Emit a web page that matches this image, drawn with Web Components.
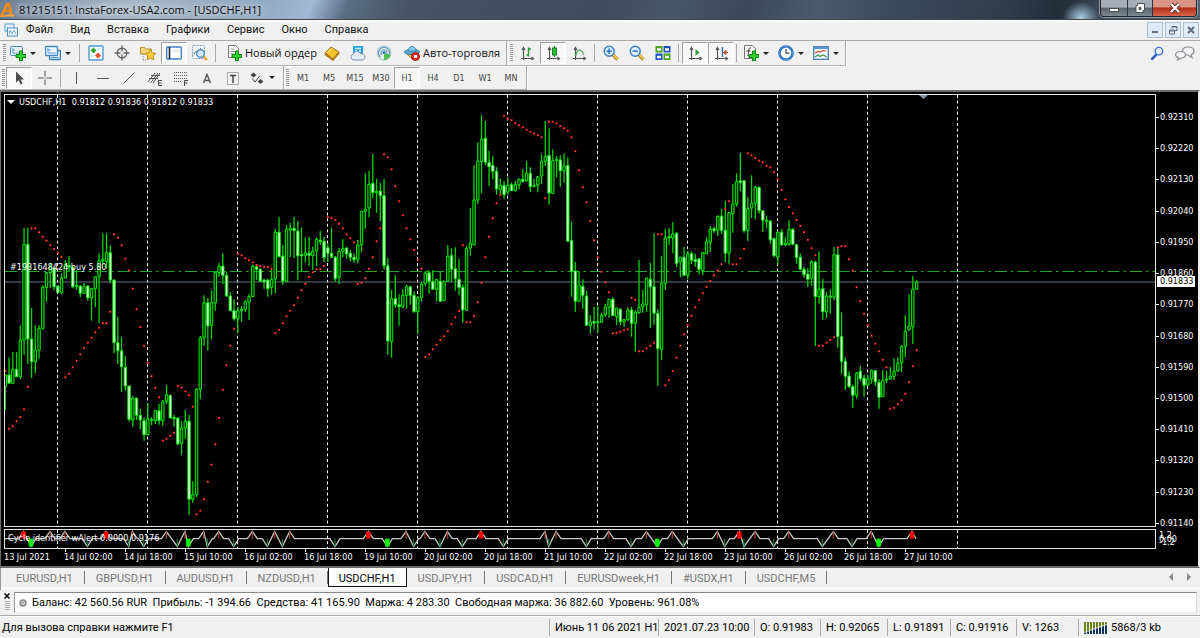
<!DOCTYPE html>
<html lang="ru">
<head>
<meta charset="utf-8">
<title>81215151: InstaForex-USA2.com - [USDCHF,H1]</title>
<style>
html,body{height:100%}
body{margin:0;background:#f0f0f0;color:#111;font:11px/14px Roboto,"Noto Sans",sans-serif;overflow:hidden}
</style>
</head>
<body>
<trade-terminal></trade-terminal>
<script>
const define = (name, html, init) => {
  const tpl = document.createElement('template');
  tpl.innerHTML = html;
  customElements.define(name, class extends HTMLElement {
    connectedCallback() {
      if (this.shadowRoot) return;
      this.attachShadow({mode: 'open'}).append(tpl.content.cloneNode(true));
      if (init) init.call(this, this.shadowRoot);
    }
  });
};

/* ---------- icon set, 16 x 16 ---------- */
const plus = '<path d="M8.500 5.500h3v3.500h3.500v3h-3.500v3.500h-3v-3.500h-3.500v-3h3.500z" transform="translate(1 .5)" fill="#2fd32f" stroke="#0a7d0a"/>';
const lens = '<path d="M9.500 9.500l5 5" stroke="#b98a1a" stroke-width="3.200"/><path d="M10 9.500l4.500 4.500" stroke="#f6d45c" stroke-width="1.400"/><circle cx="6.200" cy="6.200" r="5" fill="#d8efff" stroke="#3d82c8" stroke-width="1.500"/>';
const axes = '<path d="M4.500 3v12M2 13.500h12M3 5l1.500-2.500L6 5M12.500 12l2 1.500-2 1.500" stroke="#555" fill="none" stroke-width="1.200"/>';
const ICONS = {
  newchart: '<rect x=".5" y="1.500" width="12" height="9" rx="1" fill="#eaf4fd" stroke="#4087bf"/><path d="M2 5h3M3 3v5h7" stroke="#5b9bd0" fill="none"/>' + plus,
  profiles: '<rect x="4.500" y="5.500" width="11" height="9" rx="1" fill="#eaf4fd" stroke="#3e7fba" stroke-width="1.400"/><rect x=".5" y="1.500" width="12" height="9" rx="1" fill="#f3f9ff" stroke="#4087bf" stroke-width="1.400"/><path d="M3 3v5h8M2 5h4M6 12.500h8" stroke="#5b9bd0" fill="none"/>',
  market: '<rect x="1" y="1" width="14" height="14" rx="1" fill="#fff" stroke="#4c9bd6" stroke-width="1.400"/><path d="M5.500 2.500l3 3-3 3-3-3z" fill="#2fa52f"/><path d="M10 7.500l3 3-3 3-3-3z" fill="#e2502c"/><path d="M9 4h4M3 11h3" stroke="#b9cfe0"/>',
  target: '<circle cx="8" cy="8" r="4.800" fill="none" stroke="#666" stroke-width="1.400"/><path d="M8 .500v6M8 9.500v6M.500 8h6M9.500 8h6" stroke="#666" stroke-width="1.400"/>',
  nav: '<path d="M.500 2.500h4l1 1.500h6v5h-11z" fill="#f6d978" stroke="#b99032"/><path d="M3 9v6h3" stroke="#888" fill="none" stroke-dasharray="1 1"/><path d="M10.500 4.500l1.700 3.400 3.700.5-2.700 2.600.7 3.700-3.400-1.700-3.300 1.700.6-3.700-2.600-2.600 3.600-.5z" fill="#f9cf3e" stroke="#bd8b18"/>',
  terminal: '<rect x=".7" y="2" width="14.600" height="12" rx="1" fill="#fff" stroke="#3f82c2" stroke-width="1.400"/><path d="M3.500 2v12" stroke="#22262c" stroke-width="1.600"/><path d="M6 5h8M6 7h8" stroke="#d3e2ef"/>',
  tester: '<rect x=".5" y=".5" width="12" height="13" rx="1" fill="#eef3f7" stroke="#8c9ba9" stroke-dasharray="2 1"/><path d="M2 9l2-3 2 2 3-5" stroke="#777" fill="none"/><path d="M11 11l4 4" stroke="#e0a92a" stroke-width="2.400"/><circle cx="8.500" cy="8.500" r="3.800" fill="#cfe6fa" fill-opacity=".8" stroke="#4d90cc" stroke-width="1.400"/>',
  order: '<path d="M2.500.500h7l3 3v9h-10z" fill="#fff" stroke="#777"/><path d="M4.500 4h4M4.500 6.500h6M4.500 9h4" stroke="#999"/>' + plus,
  editor: '<path d="M1 8l6-6 8 5-6 7z" fill="#f5c22d" stroke="#a8741a"/><path d="M1 8v2l8 5.500V14zM9 14v1.500l6-6.500V7z" fill="#c3881c" stroke="#94610c" stroke-width=".6"/><path d="M4 7.500l4-4" stroke="#fff3b0"/>',
  vps: '<path d="M3 1h10v8H3z" fill="#26a0e8"/><path d="M5 3.500h6M5 6h2M9 6h2" stroke="#d4f0ff" stroke-width="1.400"/><path d="M3.500 15a3 3 0 01-.5-5.800 4 4 0 017.500-.4A3.200 3.200 0 0113 15z" fill="#e7edf6" stroke="#8795b0"/>',
  signal: '<circle cx="8" cy="8" r="7" fill="#e4efe9" stroke="#9fc0b8"/><path d="M4.500 12a5.500 5.500 0 117 0M6 10a3 3 0 114 0" fill="none" stroke="#6a9fc0" stroke-width="1.200"/><circle cx="8" cy="7.500" r="1.500" fill="#2d6dc4"/><path d="M8 8v7a7 7 0 006.500-5z" fill="#4fbd4f"/>',
  auto: '<path d="M2 8l6 6 6-6z" fill="#f3c445" stroke="#b58618"/><ellipse cx="8" cy="7" rx="7.500" ry="2.600" fill="#5eabd4" stroke="#2e789f"/><path d="M4 6a4 4.500 0 018 0z" fill="#87cbea" stroke="#3b86ac"/><circle cx="11.500" cy="11.500" r="4" fill="#e02b20" stroke="#a3130c"/><rect x="10" y="10" width="3" height="3" fill="#fff"/>',
  bars: axes + '<path d="M9.500 2.500v9M9.500 4h2.500M7.500 10h2" stroke="#1f9b2e" stroke-width="1.400"/>',
  candle: axes + '<path d="M9.500 1v11" stroke="#148224" stroke-width="1.200"/><rect x="7.500" y="3" width="4" height="7" fill="#29c43b" stroke="#148224"/>',
  line: axes + '<path d="M4.500 11c2-7 5-8 8.500-1.500" fill="none" stroke="#4fab57" stroke-width="1.300"/>',
  zoomin: lens + '<path d="M6.200 3.500v5.400M3.500 6.200h5.400" stroke="#2d70b8" stroke-width="1.500"/>',
  zoomout: lens + '<path d="M3.500 6.200h5.400" stroke="#2d70b8" stroke-width="1.500"/>',
  tile: '<rect x=".5" y="1" width="7" height="6.500" fill="#4aa51e"/><rect x="8.500" y="1" width="7" height="6.500" fill="#1e4fc4"/><rect x=".5" y="8.500" width="7" height="6.500" fill="#1e4fc4"/><rect x="8.500" y="8.500" width="7" height="6.500" fill="#4aa51e"/><path d="M2 4.500h4M10 4.500h4M2 12h4M10 12h4" stroke="#fff" stroke-width="2.400"/>',
  scroll: axes + '<path d="M8.500 4v7l4-3.500z" fill="#22a334"/>',
  shift: axes + '<path d="M9.500 2v10" stroke="#376ea8" stroke-width="1.400"/><path d="M15 7.500h-4M13 5.500l-2.500 2 2.500 2z" stroke="#c6462a" fill="#c6462a"/>',
  indic: '<path d="M1.500.500h8l3 3v10h-11z" fill="#fff" stroke="#777"/><path d="M8 3c-3-1-2 3-3 8M3.500 6h4" stroke="#333" fill="none"/>' + plus,
  clock: '<circle cx="8" cy="8" r="6.600" fill="#f7fbff" stroke="#1c62b4" stroke-width="2.400"/><circle cx="8" cy="8" r="6.800" fill="none" stroke="#5ba4e6" stroke-width=".8"/><path d="M8 4v4.200h3.500" fill="none" stroke="#444" stroke-width="1.200"/>',
  templ: '<rect x=".7" y="1.700" width="14.600" height="12.600" fill="#f5f9fc" stroke="#4f86b8" stroke-width="1.400"/><path d="M1 3h14" stroke="#5e95c8" stroke-width="2"/><path d="M2 8l3-1.500 2 .500 3-1.500 3 .500" stroke="#c84b32" fill="none" stroke-width="1.200"/><path d="M2 12l3-2 2 1.500 3-1.500 4 2" stroke="#3a9444" fill="none" stroke-width="1.200"/>',
  cursor: '<path d="M5 1.500v11l2.600-2.300 2 4.300 1.900-.9-2-4.100h3.500z" fill="#4a4a4a"/>',
  cross: '<path d="M8 1v5.500M8 9.500V15M1 8h5.500M9.500 8H15M8 7.500v1" stroke="#555"/>',
  vline: '<path d="M7.500 2v12" stroke="#555"/>',
  hline: '<path d="M2 8.500h12" stroke="#555"/>',
  trend: '<path d="M2.500 13.500l11-11" stroke="#555"/>',
  chan: '<path d="M1 12L8 3M3.500 13L11 3M6 13l7-10M2 8.500h9M4 5.500h9" stroke="#555" fill="none"/><path d="M15 10.500h-3.500v5H15M11.500 13h3" stroke="#444" fill="none"/>',
  fib: '<path d="M1 2.500h13M1 5.500h13M1 8.500h13M1 11.500h8" stroke="#555" stroke-dasharray="1 1"/><path d="M15 10.500h-3.500V16M11.500 13h3" stroke="#444" fill="none"/>',
  text: '<path d="M4.500 13L8 4.500 11.500 13M5.500 10.500h5" fill="none" stroke="#555" stroke-width="1.400"/>',
  label: '<rect x="2.500" y="2.500" width="11" height="12" fill="none" stroke="#666" stroke-dasharray="1 1"/><path d="M5 5.500h6M8 5.500V13" stroke="#444" stroke-width="1.500" fill="none"/>',
  shapes: '<path d="M4.500 2.500l3 2.500-3 2.500-3-2.500z" fill="#444"/><path d="M11.500 9l3 2.500-3 2.500-3-2.500z" fill="#444"/><path d="M3 8.500l3 3.500 5-6.500" stroke="#444" fill="none"/>',
  search: '<path d="M7 9l-5.500 5.500" stroke="#2a57c0" stroke-width="2.600"/><circle cx="9.500" cy="5.500" r="4" fill="#eef4ff" stroke="#3f6fd6" stroke-width="1.500"/>',
};
const svg = (name, w = 16) => `<svg width="${w}" height="${w}" viewBox="0 0 16 16" fill="none" aria-hidden="true">${ICONS[name]}</svg>`;

define('tool-button', `
<style>
:host{display:block;flex:none}
button{box-sizing:border-box;width:26px;height:22px;margin:0;border:1px solid transparent;padding:0;background:none;font:inherit;color:#444;display:flex;align-items:center;justify-content:center;gap:3px;white-space:nowrap}
svg{flex:none}
:host([drop]) button{width:35px;justify-content:flex-start;padding-left:2px;gap:4px}
:host([drop]) button::after{content:"";border:3px solid transparent;border-top-color:#222;border-bottom:0}
:host([pressed]) button{border-color:#a0a0a0 #fff #fff #a0a0a0;background:#f8f8f8}
:host([wide]) button{width:100px;padding:0 0 0 6px;justify-content:flex-start;color:#111;font:11px/14px "Open Sans",sans-serif}
:host([wide=l]) button{width:109px}
:host([tf]) button{font:9px/12px "DejaVu Sans Condensed","DejaVu Sans",sans-serif}
</style><button type="button"><slot></slot></button>`, function (r) {
  const n = this.getAttribute('icon'), b = r.querySelector('button');
  if (n) b.insertAdjacentHTML('afterbegin', svg(n));
  if (this.title) b.setAttribute('aria-label', this.title);
});

define('tool-band', `
<style>
:host{display:flex;align-items:center;box-sizing:border-box;padding-right:2px;border-right:1px solid #a5a5a5;border-bottom:1px solid #b4b4b4;box-shadow:1px 1px #fff}
:host([tight]){padding:0 0 0 1px}
i{flex:none;width:3px;height:18px;margin:0 1px 0 2px;background:repeating-linear-gradient(#999 0 1px,#f0f0f0 1px 2px)}
::slotted(hr){flex:none;width:1px;height:18px;margin:0 3px 0 2px;border:0;background:#a8a8a8}
</style><i></i><slot></slot>`);

define('title-bar', `
<style>
:host{display:flex;align-items:flex-start;height:19px;border-bottom:1px solid #3e454d;color:#0a0a0a;
background:radial-gradient(ellipse 18px 16px at 1081px 18px,#a9cbe2,transparent),radial-gradient(ellipse 150px 30px at 125px 9px,rgba(200,212,222,.75),transparent),
linear-gradient(115deg,#5f7288 0,#8ba3ba 20%,#9fb9d4 26%,#5a6e86 29%,#475365 34%,#3f4c5e 50%,#485669 56%,#3a4859 62%,#4b5a6f 68%,#3b4a5c 74%,#2e3b4a 84%,#222d39 88%,#3a4756 91%,#56636f 100%)}
.logo{flex:none;margin:2px 3px 0 0}
h1{flex:1;margin:3px 0 0;font:11px/14px "Open Sans",sans-serif;text-shadow:0 0 4px #c8d4de,0 0 6px #c8d4de,0 0 8px #c8d4de;white-space:nowrap}
.box{display:flex;margin-right:3px;border:1px solid #1f2730;border-top:0;border-radius:0 0 4px 4px;overflow:hidden;box-shadow:0 0 0 1px #8f9ba6}
button{height:16px;padding:0;border:0;border-right:1px solid #2c3540;display:grid;place-items:center;background:linear-gradient(#a7adb4 0 45%,#59616b 50%,#7e8790)}
.min{width:27px}.max{width:25px}
.close{width:43px;border:0;background:linear-gradient(#d99486 0 42%,#b1301b 50%,#d8624a)}
</style>
<svg class="logo" width="16" height="16" viewBox="0 0 16 16" aria-hidden="true"><path d="M0 14L6 1h4l3 12h-3L9 10H5l-2 4zM6 8h3L8 4z" fill="#ee8a1c" fill-rule="evenodd"/><path d="M0 14c5-1 9-2 15-1l-2 2c-4-1-8 0-13 0z" fill="#f7a43a"/></svg>
<h1>81215151: InstaForex-USA2.com - [USDCHF,H1]</h1>
<div class="box">
<button class="min" aria-label="Свернуть"><svg width="12" height="12"><rect x="1.500" y="6.500" width="9" height="3" fill="#fff" stroke="#4a4f57"/></svg></button>
<button class="max" aria-label="Развернуть"><svg width="12" height="12" fill="none"><path d="M3.500 1.500h7v7h-1.500v2h-7v-7h1.500z" fill="#fff" stroke="#4a4f57"/><path d="M5 5.500h2v2H5z" fill="#59616b" stroke="#4a4f57"/></svg></button>
<button class="close" aria-label="Закрыть"><svg width="12" height="12" fill="none"><path d="M2 2l8 8M10 2l-8 8" stroke="#54201a" stroke-width="4"/><path d="M2 2l8 8M10 2l-8 8" stroke="#fff" stroke-width="2.400"/></svg></button>
</div>`);

define('menu-bar', `
<style>
:host{display:flex;align-items:center;box-sizing:border-box;height:21px;background:linear-gradient(#fff,#f0f0f0 3px);border-bottom:1px solid #aaa}
.doc{margin:0 0 0 4px}
nav{flex:1;display:flex}
nav button{border:0;background:none;margin:0;padding:0 9px 0 8px;font:11px/16px Roboto,sans-serif;color:#111}
.mdi{display:flex;gap:2px;padding-right:1px}
.mdi button{width:16px;height:16px;padding:0;border:1px solid #a9bfd4;background:#dfebf7;display:grid;place-items:center}
</style>
<svg class="doc" width="14" height="14" viewBox="0 0 14 14" aria-hidden="true"><rect x="1" y="1" width="9" height="7" fill="#dff0fc" stroke="#5a9bd0"/><rect x="3.500" y="5" width="10" height="8" fill="#f4faff" stroke="#4a8cc6"/><path d="M5 11l1-4 2 4 2-4 2 4" stroke="#69a6d8" fill="none"/></svg>
<nav></nav>
<div class="mdi"><button aria-label="Свернуть окно"><svg width="8" height="8"><path d="M1 6h6" stroke="#5c6f82" stroke-width="2"/></svg></button><button aria-label="Восстановить окно"><svg width="9" height="9" fill="none" stroke="#5c6f82"><path d="M3 2.500v-2h5v4H6M3 1h5M.500 4h5v4h-5zM.500 5h5"/></svg></button><button aria-label="Закрыть окно"><svg width="8" height="8"><path d="M1 1l6 6M7 1L1 7" stroke="#5c6f82" stroke-width="2"/></svg></button></div>`, function (r) {
  r.querySelector('nav').innerHTML = ['Файл', 'Вид', 'Вставка', 'Графики', 'Сервис', 'Окно', 'Справка'].map(t => `<button type="button">${t}</button>`).join('');
});

/* ---------- chart data: high, low, body top, body bottom, in thirds of a pixel; a trailing 1 marks a falling bar ---------- */
const BARS = `855 960 855 890|802 880 855 880 1|786 880 838 880|786 862 838 860 1|706 868 750 860|414 795 463 750|414 822 463 747 1|654 864 747 815 1|706 850 780 815|706 806 716 780|586 716 592 716|545 635 548 592|518 593 530 548|530 601 533 590 1|586 608 588 608 1|550 613 564 608|510 565 524 564|498 545 526 532 1|530 595 532 590 1|540 600 586 590|586 622 588 610 1|578 610 590 610|585 632 588 624 1|594 692 596 624|558 652 560 596|490 700 512 560|430 524 508 512|430 536 488 515|465 580 488 570 1|568 790 570 758 1|680 822 758 782 1|740 906 782 830 1|798 902 832 888 1|888 995 888 988 1|918 1010 924 990|924 990 924 976 1|956 1018 976 990 1|982 1052 992 1034 1|940 1034 986 1034|982 1006 988 992|960 1002 962 992|942 1004 962 992 1|930 1008 936 992|886 942 914 934|915 984 916 984 1|974 1010 982 986 1|982 1066 984 1062 1|994 1094 1014 1060|960 1046 994 1014|975 1275 994 1228 1|1174 1238 1214 1228|895 1222 898 1214|738 928 744 898|616 768 638 744|624 782 638 708 1|602 748 638 706|545 662 548 638|518 560 528 548|490 582 528 556 1|545 620 556 618 1|606 664 618 662 1|628 692 662 686 1|650 730 662 686|648 696 658 662|630 666 636 658|612 690 620 636|524 620 528 620|525 570 530 538 1|535 576 538 574 1|566 596 570 576 1|566 620 570 596 1|540 614 568 592|417 610 427 567|380 502 427 500 1|465 584 498 574 1|405 576 418 574|398 502 416 420|380 505 415 422 1|393 571 423 497 1|412 545 494 498 1|442 518 488 496|442 528 490 496 1|470 540 484 497|442 528 448 483|422 465 451 455 1|440 516 454 503 1|460 516 473 490 1|413 504 490 502 1|498 575 502 566 1|474 582 484 562|448 502 476 484|471 506 474 492 1|480 514 490 502 1|490 518 502 509 1|450 520 465 508|363 487 364 464|250 416 357 364|242 382 283 354|191 324 280 308 1|267 368 304 308|278 394 303 317 1|267 539 317 527 1|504 794 527 753 1|600 803 626 755|555 654 626 644 1|613 707 644 650 1|597 655 616 650|585 656 589 616|588 644 590 616 1|603 668 616 665 1|618 731 623 665|575 635 582 623|544 587 549 580|540 611 548 574 1|540 600 575 598 1|566 634 569 598|544 635 574 634 1|572 633 574 632|465 576 499 574|475 576 497 538 1|472 602 536 566 1|507 616 568 593 1|582 698 592 660 1|468 663 476 661|354 497 460 474|225 466 330 464|157 343 213 330|76 310 148 215|93 225 145 217 1|182 288 217 230 1|197 268 226 244 1|232 314 244 297 1|265 314 286 299|273 326 286 314 1|262 314 286 306|277 304 284 302 1|273 304 284 302|265 298 268 284|237 278 268 274 1|213 275 250 272|232 306 250 290 1|266 291 286 290|258 307 261 286|192 282 214 258|93 228 200 214|115 344 196 310 1|178 312 212 310|198 262 208 212|196 291 210 242 1|190 278 228 242|202 456 226 454 1|394 620 452 544 1|516 665 542 634 1|543 635 586 634|568 656 589 616 1|603 707 618 706 1|676 731 696 706|650 718 694 700 1|647 729 695 698|668 698 676 697|642 682 652 674|628 684 628 652|622 677 628 677 1|653 706 654 680|655 706 658 695 1|686 711 689 695|652 692 660 689|650 740 660 700 1|661 785 667 700|510 672 652 668|600 668 642 650|562 665 564 644|518 714 568 590 1|430 704 590 670 1|656 887 670 776 1|498 810 581 778|416 600 444 580|414 465 440 444 1|396 490 432 444|427 532 430 520 1|500 561 502 516|471 558 502 556 1|483 568 491 556|485 523 491 511 1|491 530 508 515 1|504 552 506 538 1|487 556 488 542|442 492 455 491|408 486 418 457|410 428 416 422 1|376 438 379 421|357 432 379 421 1|333 517 421 490 1|366 523 368 490|282 428 342 371|250 350 275 342|189 304 272 278 1|270 428 272 422 1|322 453 356 422|256 384 340 354|288 388 292 340|290 371 292 362 1|360 426 362 391 1|378 415 390 394|390 461 393 449 1|442 503 446 497 1|424 524 427 502|418 466 427 465 1|442 467 460 465|391 467 418 463|415 465 418 463 1|462 521 464 503 1|490 540 502 538 1|530 563 538 554 1|534 591 552 568 1|510 587 516 565|512 768 516 620 1|484 641 598 620|566 689 596 665 1|606 684 618 665|598 671 618 622|471 630 494 622|470 773 494 740 1|667 852 740 814 1|802 900 814 859 1|844 893 858 890 1|884 953 890 916 1|846 926 850 916|828 872 844 866 1|854 920 864 886 1|855 888 867 886|839 881 841 867|841 887 842 876 1|867 956 877 922 1|840 920 871 920|842 880 867 870|831 869 859 867|804 870 844 859|801 846 820 842|765 847 769 818|676 802 724 769|613 722 708 720|558 762 598 709|571 600 576 598`.split('|').map(s => s.split(' ').map(Number));
const SAR = [842,1016,1009,994,981,958,890,415,415,427,440,452,466,477,488,500,862,851,832,812,793,775,758,743,727,713,700,700,665,433,443,466,506,541,596,658,711,767,818,859,893,922,1052,1046,1037,1028,888,893,904,916,950,1273,1262,1228,1175,1124,1063,984,899,826,767,716,491,496,505,511,517,525,528,530,531,536,730,719,700,679,662,646,623,601,581,561,547,538,538,528,382,384,390,401,415,433,445,457,581,578,565,536,502,454,415,193,202,238,289,334,376,415,448,480,511,536,801,793,778,764,750,739,724,703,682,663,466,697,697,677,637,578,502,440,385,340,314,77,86,91,100,106,112,119,125,130,136,142,325,95,95,100,109,115,122,142,184,241,292,337,393,451,502,545,577,607,730,728,725,721,718,623,629,784,784,775,767,758,433,433,886,871,843,803,767,733,706,677,652,629,610,590,573,556,542,523,358,334,523,523,505,477,190,196,204,212,217,227,232,247,268,300,328,351,370,390,407,427,449,475,496,767,767,758,750,742,472,469,469,508,542,592,634,671,706,737,761,784,809,832,956,953,943,931,911,877,829,781];
/* cycle turns: x in thirds of a pixel; u/d = minor high/low, U/D = major */
const CYCLE = '71U 93D 150u 195u 262d 318U 386d 397u 431d 499u 532d 555u 565D 611u 622d 656u 701d 757u 802d 824u 847d 869u 1005d 1105U 1162D 1218u 1241d 1275u 1320d 1342u 1387d 1443U 1510d 1635u 1646d 1668u 1759d 1826u 1893d 1939u 1972D 2017u 2050d 2152u 2174d 2218U 2232d 2265u 2321d 2366u 2467d 2500u 2556d 2614u 2636D 2736U';
const STEP = 3.75;

define('price-chart', `
<style>
:host{display:grid;grid-template:minmax(0,1fr) 20px 15px / minmax(0,1fr) 40px;row-gap:2px;box-sizing:border-box;padding:2px 2px 0 3px;background:#000;color:#fff;
border:solid #6b6b6b;border-width:2px 2px 2px 1px;border-right-color:#f0f0f0;font:9px/12px "DejaVu Sans Condensed","DejaVu Sans",sans-serif}
.plot{position:relative;border:1px solid #e4e4e4;min-height:0;min-width:0}
.plot svg{display:block;width:100%;height:100%}
.cap{position:absolute;left:2px;top:1px;display:flex;align-items:center;gap:4px;white-space:pre}
.cap::before{content:"";border:4px solid transparent;border-top-color:#fff;border-bottom:0}
.pos{position:absolute;left:5px;top:166px}
.sub .name{position:absolute;left:3px;top:2px}
.axis{display:flex;flex-direction:column;justify-content:space-between;padding:17px 0 0;margin-bottom:-2px;position:relative}
.axis span{padding-left:4px;background:linear-gradient(#fff,#fff) 0 6px/3px 1px no-repeat}
.now{position:absolute;left:1px;top:182px;width:38px;box-sizing:border-box;padding-left:3px;background:#fff;color:#000;line-height:11px}
.osc{position:relative}
.osc span{position:absolute;left:3px}
.osc span:nth-child(1){top:0}.osc span:nth-child(2){top:4px}.osc span:nth-child(3){top:7px}
.time{display:grid;grid-auto-flow:column;grid-auto-columns:60px;grid-column:1/3;margin-top:-2px}
.time span{height:12px;padding-top:2px;white-space:nowrap;background:linear-gradient(#fff,#fff) 1px 0/1px 3px no-repeat}
.time span:first-child{background:none}
</style>
<div class="plot"><svg role="img" aria-label="График USDCHF H1"></svg><div class="cap">USDCHF,H1  0.91812 0.91836 0.91812 0.91833</div><div class="pos">#1931648424 buy 5.80</div></div>
<div class="axis"><div class="now">0.91833</div></div>
<div class="plot sub"><svg aria-hidden="true"></svg><div class="name">Cycle identifier wAlert 0.0000 0.9176</div></div>
<div class="osc"><span>1.2</span><span>0.00</span><span>-1.2</span></div>
<div class="time"></div>`, function (r) {
  const [main, sub] = r.querySelectorAll('svg');
  let grid = '';
  for (let x = 57.5; x < 1000; x += 90) grid += `<line x1="${x}" x2="${x}" y1="0" y2="100%" stroke="#fff" stroke-dasharray="3 2.600"/>`;
  let wick = '', up = '', down = '', dots = '';
  BARS.forEach(([h, l, t, b, f], i) => {
    const x = 5.3 + i * STEP, y = v => (90 + v / 3).toFixed(1);
    wick += `M${x} ${y(h)}V${y(l)}`;
    const box = `M${x - 1.2} ${y(t)}h2.400V${y(b)}h-2.400z`;
    if (f) down += box; else up += box;
    dots += `M${x - 1} ${y(SAR[i])}h2`;
  });
  main.innerHTML = `<g transform="translate(-5 -95)"><g transform="translate(0 95)">${grid}</g>
<path d="M5 271.500H1160" stroke="#25a425" stroke-dasharray="12 4 2.500 4"/><path d="M5 282H1160" stroke="#667381" stroke-width="1.200"/>
<path d="${wick}" stroke="#00d400" stroke-width="1.300"/><path d="${up}" fill="#002c00" stroke="#00ee00"/><path d="${down}" fill="#f0fff0" stroke="#00e800"/>
<path d="${dots}" stroke="#ff1414" stroke-width="2"/><path d="${dots}" stroke="#ffb0a0" stroke-width=".7" stroke-dasharray="0 .6 .8 3"/>
<path d="M919 95h9l-4.500 4z" fill="#8496a8"/></g>`;
  const pts = CYCLE.split(' ').map(s => [parseInt(s) / 3, s.slice(-1)]);
  let line = 'M5 538.700', last = 5, marks = '';
  for (const [x, k] of pts) {
    const hi = k.toLowerCase() === 'u', y = hi ? 531.5 : 546.5;
    if (x - last > 11) { if (last > 5) line += `L${last + 5} 538.700`; line += `L${x - 5} 538.700`; }
    line += `L${x} ${y}`;
    last = x;
    marks += `<path d="M${x} 538.700V${y}" stroke="${hi ? (k === 'U' ? '#f00' : '#a33') : (k === 'D' ? '#0f0' : '#173')}" stroke-width="${k === k.toUpperCase() ? 4.5 : 1.2}"/>`;
  }
  line += `L${last + 4} 538.700`;
  sub.innerHTML = `<g transform="translate(-5 -530)"><g transform="translate(0 530)">${grid}</g><path d="${line}" fill="none" stroke="#c8c8c8" stroke-width="1.300"/>${marks}</g>`;
  r.querySelector('.axis').insertAdjacentHTML('beforeend', ['0.92310','0.92220','0.92130','0.92040','0.91950','0.91860','0.91770','0.91680','0.91590','0.91500','0.91410','0.91320','0.91230','0.91140'].map(p => `<span>${p}</span>`).join(''));
  r.querySelector('.time').innerHTML = ['13 Jul 2021','14 Jul 02:00','14 Jul 18:00','15 Jul 10:00','16 Jul 02:00','16 Jul 18:00','19 Jul 10:00','20 Jul 02:00','20 Jul 18:00','21 Jul 10:00','22 Jul 02:00','22 Jul 18:00','23 Jul 10:00','26 Jul 02:00','26 Jul 18:00','27 Jul 10:00'].map(p => `<span>${p}</span>`).join('');
});

define('chart-tabs', `
<style>
:host{display:flex;align-items:flex-start;height:22px;padding-left:4px;border-left:1px solid #999;box-sizing:border-box;background:linear-gradient(#f0f0f0 19px,#fafafa 19px)}
.list{display:flex;flex:1}
.list button{box-sizing:border-box;height:19px;margin:0;padding:0 12px 0 11px;border:0;background:linear-gradient(#777,#777) 100% 3px/1px 13px no-repeat;font:11px/22px Roboto,sans-serif;color:#777}
.list button[aria-selected=true]{background:#fff;color:#000;border:solid #111;border-width:0 1px 1px;padding:0 10px}
.arrow{border:0;background:none;padding:5px 5px 0;width:18px}
</style><div class="list" role="tablist"></div>
<button class="arrow" aria-label="Влево"><svg width="4" height="8" style="display:block"><path d="M4 0v8L0 4z" fill="#888"/></svg></button><button class="arrow" aria-label="Вправо"><svg width="4" height="8" style="display:block"><path d="M0 0v8l4-4z" fill="#888"/></svg></button>`, function (r) {
  r.querySelector('.list').innerHTML = ['EURUSD,H1','GBPUSD,H1','AUDUSD,H1','NZDUSD,H1','USDCHF,H1','USDJPY,H1','USDCAD,H1','EURUSDweek,H1','#USDX,H1','USDCHF,M5'].map((t, i) => `<button type="button" role="tab" aria-selected="${i === 4}">${t}</button>`).join('');
});

define('account-line', `
<style>
:host{display:flex;height:26px;box-sizing:border-box;padding:2px 3px 2px 0;border-bottom:1px solid #aaa}
.side{width:14px;display:flex;flex-direction:column;align-items:center}
.side button{border:0;background:none;padding:1px 0 2px;height:9px}
.side svg{display:block}
.side i{width:5px;height:9px;background:repeating-linear-gradient(#aaa 0 1px,#f0f0f0 1px 2px)}
.row{flex:1;display:flex;align-items:center;gap:5px;padding-left:4px;background:#fff;border:1px solid #888;border-color:#888 #ddd #eee #999;white-space:pre;color:#000}
</style>
<div class="side"><button type="button" aria-label="Закрыть"><svg width="6" height="6"><path d="M.500.500l5 5M5.500.500l-5 5" stroke="#000" stroke-width="1.500"/></svg></button><i></i></div>
<div class="row"><svg width="8" height="8"><circle cx="4" cy="4" r="3" fill="#ccc" stroke="#888" stroke-width="1.400"/><path d="M2.500 5.500l3-3" stroke="#888"/></svg><span>Баланс: 42 560.56 RUR  Прибыль: -1 394.66  Средства: 41 165.90  Маржа: 4 283.30  Свободная маржа: 36 882.60  Уровень: 961.08%</span></div>`);

define('status-bar', `
<style>
:host{display:grid;grid-template-columns:minmax(0,1fr) 109px 96px 66px 67px 63px 66px 62px 122px;height:22px;align-items:center;border-top:1px solid #fff;box-sizing:border-box;color:#000;white-space:nowrap}
span{box-sizing:border-box;height:17px;line-height:18px;padding-left:5px;border-left:1px solid #aaa;display:flex;align-items:center;gap:4px}
span:first-of-type{border:0;padding-left:2px}
</style>
<span>Для вызова справки нажмите F1</span><span>Июнь 11 06 2021 H1</span><span>2021.07.23 10:00</span><span>O: 0.91983</span><span>H: 0.92065</span><span>L: 0.91891</span><span>C: 0.91916</span><span>V: 1263</span><span class="net"></span>`, function (r) {
  let b = '';
  for (let i = 0; i < 8; i++) b += `<path d="M${i * 3 + 1} 0v${10 - i}" stroke="#6b8218" stroke-width="2"/><path d="M${i * 3 + 1} ${10 - i}V12" stroke="#16355e" stroke-width="2"/>`;
  r.querySelector('.net').innerHTML = `<svg width="23" height="12" aria-hidden="true">${b}<path d="M0 10.500L23 2.500" stroke="#f0f0f0" stroke-width=".8"/></svg>5868/3 kb`;
});

const tool = (icon, title, attrs = '', text = '') => `<tool-button icon="${icon}" title="${title}" ${attrs}>${text}</tool-button>`;
define('trade-terminal', `
<style>
:host{display:flex;flex-direction:column;height:100vh;min-height:400px}
price-chart{flex:1;min-height:0}
title-bar,menu-bar,chart-tabs,account-line,status-bar{flex:none}
.bars{display:flex;flex:none;height:25px}
.bars.draw{height:24px}
.tail{display:flex;flex:1;justify-content:flex-end;align-items:center;gap:10px;padding-right:5px}
.tail button{border:0;background:none;padding:0}
.tail svg{display:block}
</style>
<title-bar></title-bar><menu-bar></menu-bar>
<div class="bars">
<tool-band tight>${tool('newchart','Новый график','drop')}${tool('profiles','Профили','drop')}<hr>${tool('market','Обзор рынка')}${tool('target','Окно данных')}${tool('nav','Навигатор')}${tool('terminal','Терминал','pressed')}${tool('tester','Тестер стратегий')}<hr>${tool('order','Новый ордер','wide','Новый ордер')}${tool('editor','MetaEditor')}${tool('vps','VPS')}${tool('signal','Сигналы')}${tool('auto','Авто-торговля','wide="l"','Авто-торговля')}</tool-band>
<tool-band tight>${tool('bars','Бары')}${tool('candle','Свечи','pressed')}${tool('line','Линия')}<hr>${tool('zoomin','Увеличить')}${tool('zoomout','Уменьшить')}${tool('tile','Расположить окна')}<hr>${tool('scroll','Автопрокрутка','pressed')}${tool('shift','Сдвиг графика','pressed')}<hr>${tool('indic','Индикаторы','drop')}${tool('clock','Периоды','drop')}${tool('templ','Шаблоны','drop')}</tool-band>
<div class="tail"><button type="button" aria-label="Поиск">${svg('search', 15)}</button><button type="button" aria-label="Чат"><svg width="20" height="15" viewBox="0 0 20 15" fill="#f4f4f6" stroke="#8c8c92" stroke-width="1.200"><path d="M13 1c4 0 6 1.500 6 4s-1.500 3.500-3 3.800l1 2.700-4-2.500C9 9 7.500 7 7.500 5S9 1 13 1z"/><path d="M5.500 5.500c3 0 5 1.300 5 3.300s-2 3.200-4.500 3.200l-3 2 .5-2.500C1.500 11 .600 10 .600 8.800c0-2 2-3.300 4.900-3.300z"/></svg></button></div>
</div>
<div class="bars draw">
<tool-band>${tool('cursor','Курсор','pressed')}${tool('cross','Перекрестие')}<hr>${tool('vline','Вертикальная линия')}${tool('hline','Горизонтальная линия')}${tool('trend','Трендовая линия')}${tool('chan','Канал')}${tool('fib','Фибоначчи')}${tool('text','Текст')}${tool('label','Метка')}${tool('shapes','Стрелки','drop')}</tool-band>
<tool-band>${['M1','M5','M15','M30','H1','H4','D1','W1','MN'].map(t => `<tool-button tf ${t === 'H1' ? 'pressed' : ''}>${t}</tool-button>`).join('')}</tool-band>
</div>
<price-chart></price-chart><chart-tabs></chart-tabs><account-line></account-line><status-bar></status-bar>`);
</script>
</body>
</html>
